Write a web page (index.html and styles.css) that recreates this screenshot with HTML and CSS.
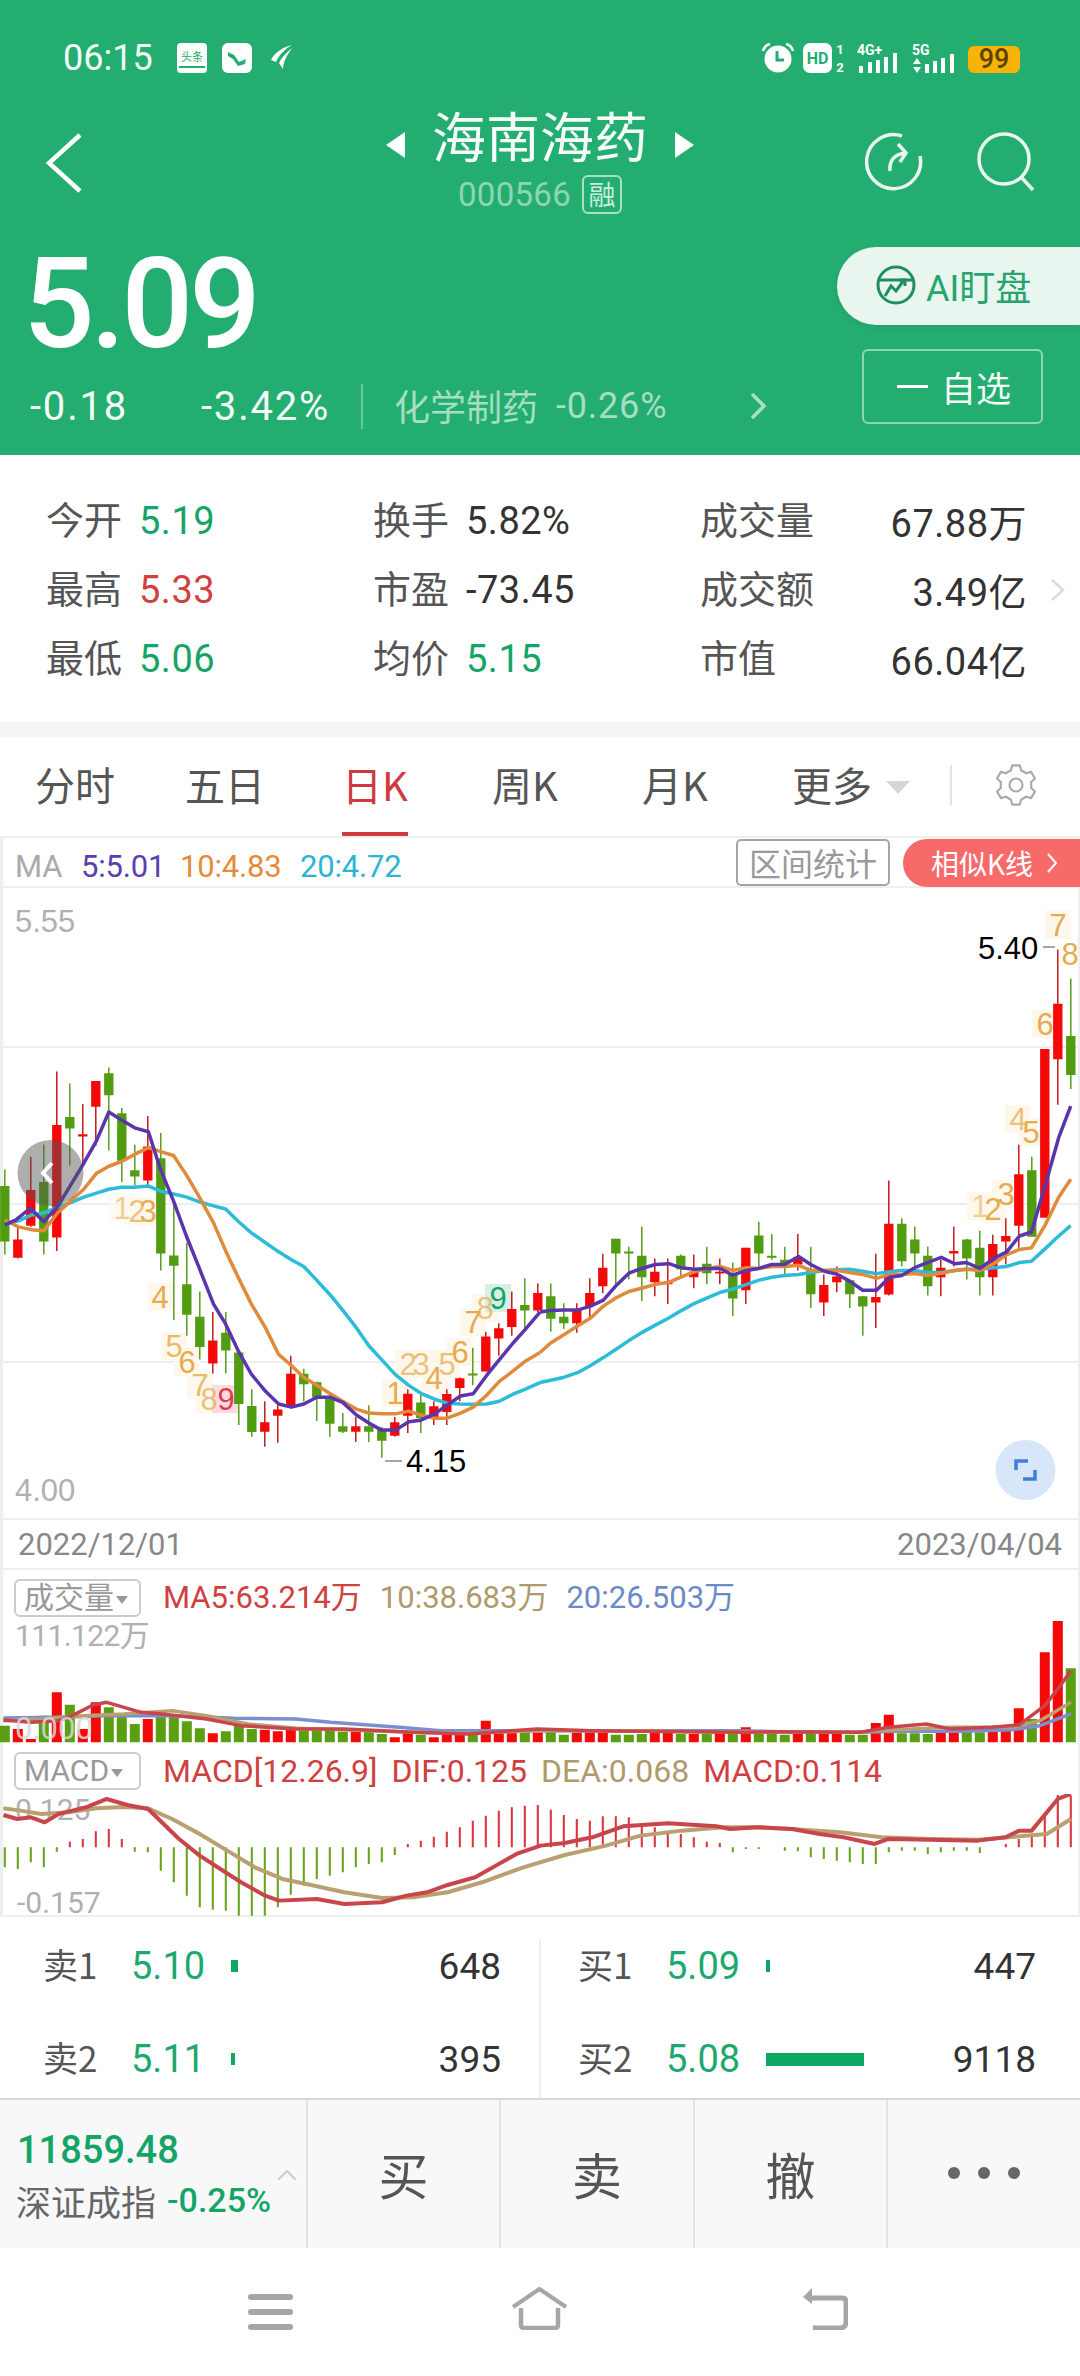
FILE: index.html
```html
<!DOCTYPE html>
<html lang="zh-CN">
<head>
<meta charset="utf-8">
<title>海南海药</title>
<link rel="stylesheet" href="styles.css">
</head>
<body>
<div class="page">
<header class="head">
  <div class="status">
    <span class="time">06:15</span>
    <svg class="st-a" width="30" height="30" viewBox="0 0 30 30"><rect width="30" height="30" rx="4" fill="#fff"/><text x="15" y="18" text-anchor="middle" class="st-small" fill="#23ad70">头条</text><rect x="2" y="23" width="26" height="2" fill="#23ad70"/></svg>
    <svg class="st-b" width="30" height="30" viewBox="0 0 30 30"><rect width="30" height="30" rx="6" fill="#fff"/><path d="M6 9l6 3 5 7 7-3-1 5-7 2-5-7-5-3z" fill="#23ad70"/></svg>
    <svg class="st-c" width="22" height="25" viewBox="0 0 22 25"><path d="M21 0C12 2 3 8 0 15l5 2C8 10 14 4 21 0zM21 3C15 8 10 13 8 18l4 6C12 16 17 9 21 3z" fill="#fff"/></svg>
    <div class="st-right">
      <svg width="32" height="30" viewBox="0 0 32 30"><circle cx="16" cy="16" r="13.5" fill="#fff"/><path d="M15 8v9h7" fill="none" stroke="#23ad70" stroke-width="3"/><path d="M1 8C2 4 4 2 8 1M31 8C30 4 28 2 24 1" fill="none" stroke="#fff" stroke-width="2.5"/></svg>
      <svg class="st-hd" width="42" height="30" viewBox="0 0 42 30"><rect width="29" height="30" rx="7" fill="#fff"/><text x="14.5" y="21" text-anchor="middle" class="st-hdt" fill="#23ad70">HD</text><text x="37" y="11" text-anchor="middle" class="st-num" fill="#fff">1</text><text x="37" y="29" text-anchor="middle" class="st-num" fill="#fff">2</text></svg>
      <svg class="st-sig" width="44" height="30" viewBox="0 0 44 30"><text x="0" y="12" class="st-net" fill="#fff">4G+</text><path d="M11 19h4v11h-4zM19 17h4v13h-4zM27 14h4v16h-4zM36 10h4v20h-4z" fill="#fff"/><path d="M2 23h4v7H2z" fill="#fff"/></svg>
      <svg class="st-sig2" width="46" height="30" viewBox="0 0 46 30"><text x="0" y="12" class="st-net" fill="#fff">5G</text><path d="M5 15l4 6H1zM5 30l4-6H1z" fill="#fff"/><path d="M13 21h4v9h-4zM21 18h4v12h-4zM29 15h4v15h-4zM38 11h4v19h-4z" fill="#fff"/></svg>
      <span class="batt">99</span>
    </div>
  </div>
  <div class="nav">
    <svg class="back" width="36" height="60" viewBox="0 0 36 60"><path d="M34 2L3 30l31 28" fill="none" stroke="#fff" stroke-width="4.5"/></svg>
    <div class="nav-mid">
      <div class="title-row">
        <i class="tri tri-l"></i>
        <span class="title">海南海药</span>
        <i class="tri tri-r"></i>
      </div>
      <div class="code-row"><span class="code">000566</span><span class="rong">融</span></div>
    </div>
    <div class="nav-right">
      <svg width="58" height="60" viewBox="0 0 58 60"><path d="M37 4A27 27 0 1 0 55 24" fill="none" stroke="#e8f6ef" stroke-width="3.5"/><path d="M25 39C24 28 30 22 41 21M33 12l8 9-6 9" fill="none" stroke="#e8f6ef" stroke-width="3.5"/></svg>
      <svg width="58" height="60" viewBox="0 0 58 60"><circle cx="27" cy="27" r="25" fill="none" stroke="#e8f6ef" stroke-width="3.5"/><path d="M45 46l11 12" stroke="#e8f6ef" stroke-width="3.5"/></svg>
    </div>
  </div>
  <div class="quote">
    <div class="q-left">
      <div class="price">5.09</div>
      <div class="chg-row">
        <span class="chg c1">-0.18</span>
        <span class="chg c2">-3.42%</span>
        <span class="sector">化学制药</span>
        <span class="sector-v">-0.26%</span>
        <svg class="sec-arrow" width="16" height="26" viewBox="0 0 16 26"><path d="M2 1l12 12L2 25" fill="none" stroke="#a8e0c4" stroke-width="3.5"/></svg>
      </div>
    </div>
    <div class="q-right">
      <div class="ai">
        <svg width="40" height="40" viewBox="0 0 40 40"><circle cx="20" cy="20" r="18" fill="none" stroke="#1d8f5e" stroke-width="3"/><path d="M3 15h34" stroke="#1d8f5e" stroke-width="3"/><path d="M9 31l6-10 5 5 8-11M23 15h6v6" fill="none" stroke="#1d8f5e" stroke-width="3"/></svg>
        <span>AI盯盘</span>
      </div>
      <div class="fav"><i class="minus"></i><span>自选</span></div>
    </div>
  </div>
</header>

<section class="stats">
  <div class="stat-grid">
    <div class="stat"><span class="lab">今开</span><span class="val gr">5.19</span></div>
    <div class="stat"><span class="lab">换手</span><span class="val">5.82%</span></div>
    <div class="stat wide"><span class="lab">成交量</span><span class="val">67.88万</span></div>
    <div class="stat"><span class="lab">最高</span><span class="val rd">5.33</span></div>
    <div class="stat"><span class="lab">市盈</span><span class="val">-73.45</span></div>
    <div class="stat wide"><span class="lab">成交额</span><span class="val">3.49亿</span></div>
    <div class="stat"><span class="lab">最低</span><span class="val gr">5.06</span></div>
    <div class="stat"><span class="lab">均价</span><span class="val gr">5.15</span></div>
    <div class="stat wide"><span class="lab">市值</span><span class="val">66.04亿</span></div>
  </div>
  <svg class="stat-arrow" width="16" height="22" viewBox="0 0 16 22"><path d="M2 1l11 10L2 21" fill="none" stroke="#dcdcdc" stroke-width="2.5"/></svg>
</section>

<nav class="tabs">
  <div class="tab-grid">
    <div class="tab"><span>分时</span></div>
    <div class="tab"><span>五日</span></div>
    <div class="tab on"><span>日K</span></div>
    <div class="tab"><span>周K</span></div>
    <div class="tab"><span>月K</span></div>
    <div class="tab more"><span>更多</span><i class="more-tri"></i></div>
  </div>
  <i class="tab-rule"></i>
  <svg class="gear" width="42" height="42" viewBox="0 0 42 42"><path d="M17.2 1.4L24.8 1.4 26.05 6.3 31.2 9.3 36.1 7.9 39.9 14.5 36.2 18 36.2 24 39.9 27.5 36.1 34.1 31.2 32.7 26.05 35.7 24.8 40.6 17.2 40.6 15.95 35.7 10.8 32.7 5.9 34.1 2.1 27.5 5.8 24 5.8 18 2.1 14.5 5.9 7.9 10.8 9.3 15.95 6.3Z" fill="none" stroke="#aaa" stroke-width="2.2" stroke-linejoin="round"/><circle cx="21" cy="21" r="6.5" fill="none" stroke="#aaa" stroke-width="2.2"/></svg>
</nav>

<section class="charts">
  <div class="ma-head">
    <div class="ma-list">
      <span class="ma-t">MA</span><span class="ma5">5:5.01</span><span class="ma10">10:4.83</span><span class="ma20">20:4.72</span>
    </div>
    <div class="ma-btns">
      <span class="range">区间统计</span>
      <span class="similar">相似K线<svg width="12" height="22" viewBox="0 0 12 22"><path d="M2 2l8 9-8 9" fill="none" stroke="#fff" stroke-width="2"/></svg></span>
    </div>
  </div>

  <svg class="kline" width="1080" height="630" viewBox="0 888 1080 630">
    <path d="M0 1047H1080M0 1204H1080M0 1362H1080" stroke="#eeeeee" stroke-width="2"/>
    <text x="15" y="932" class="ax">5.55</text>
    <text x="15" y="1501" class="ax">4.00</text>
    <g class="td-bg">
      <rect x="109" y="1194" width="26" height="28" opacity=".6"/><rect x="124" y="1197" width="26" height="28" opacity=".7"/><rect x="135" y="1197" width="26" height="28"/>
      <rect x="148" y="1283" width="26" height="28"/><rect x="161" y="1332" width="26" height="28"/><rect x="174" y="1348" width="26" height="28"/><rect x="187" y="1371" width="26" height="28"/><rect x="196" y="1385" width="26" height="28"/>
      <rect x="382" y="1379" width="26" height="28"/><rect x="395" y="1350" width="26" height="28"/><rect x="408" y="1350" width="26" height="28"/><rect x="421" y="1364" width="26" height="28"/><rect x="434" y="1350" width="26" height="28"/><rect x="447" y="1338" width="26" height="28"/><rect x="460" y="1308" width="26" height="28"/><rect x="472" y="1294" width="26" height="28"/>
      <rect x="967" y="1192" width="26" height="28"/><rect x="980" y="1195" width="26" height="28"/><rect x="992" y="1180" width="26" height="28"/><rect x="1005" y="1105" width="26" height="28"/><rect x="1018" y="1118" width="26" height="28"/><rect x="1032" y="1010" width="26" height="28"/><rect x="1045" y="911" width="26" height="28"/>
      <rect class="td-red" x="212" y="1385" width="26" height="28"/>
      <rect class="td-grn" x="485" y="1284" width="26" height="28"/>
    </g>
    <g class="td">
      <text x="122" y="1219" opacity=".55">1</text><text x="137" y="1222" opacity=".7">2</text><text x="148" y="1222">3</text>
      <text x="160" y="1308">4</text><text x="174" y="1357" opacity=".8">5</text><text x="187" y="1373">6</text><text x="200" y="1396" opacity=".8">7</text><text x="209" y="1410" opacity=".7">8</text>
      <text x="395" y="1404">1</text><text x="408" y="1375" opacity=".7">2</text><text x="421" y="1375" opacity=".7">3</text><text x="434" y="1389">4</text><text x="447" y="1375" opacity=".7">5</text><text x="460" y="1363">6</text><text x="473" y="1333">7</text><text x="485" y="1319" opacity=".7">8</text>
      <text x="980" y="1217" opacity=".55">1</text><text x="993" y="1220">2</text><text x="1006" y="1205">3</text><text x="1018" y="1130" opacity=".7">4</text><text x="1031" y="1143">5</text><text x="1045" y="1035">6</text><text x="1058" y="936">7</text><text x="1070" y="965">8</text>
      <text class="td-r" x="226" y="1410">9</text><text class="td-g" x="498" y="1309">9</text>
    </g>
    <g transform="translate(4.8,900) scale(13,.3962)">
      <path class="wick-r" d="M1 820V905M2 648V825M4 433V886M6 515V670M7 457V620M11 545V720M16 1040V1195M20 1265V1380M21 1275V1370M22 1150V1280M27 1305V1368M30 1305V1355M31 1235V1345M33 1265V1325M34 1235V1325M35 1205V1265M37 1090V1190M38 1068V1150M39 988V1100M41 968V1040M44 1018V1092M45 955V1055M46 893V992M50 905V1000M51 905V1020M53 895V980M55 905V970M57 878V1020M61 843V935M63 945V1050M64 925V990M67 893V1080M68 708V998M72 908V1000M73 824V925M76 845V998M77 803V920M78 618V878M81 125V517"/>
      <path class="body-r" d="M1 857V903M2 732V822M4 568V852M6 591V597M7 457V522M11 622V708M16 1112V1170M20 1318V1342M21 1286V1302M22 1196V1277M27 1328V1342M30 1318V1352M31 1246V1302M33 1278V1305M34 1247V1292M35 1207V1232M37 1102V1190M38 1081V1107M39 1032V1078M41 992V1036M44 1032V1068M45 992V1025M46 928V975M50 938V965M51 965V970M53 938V952M55 938V943M57 878V985M61 902V920M63 972V1016M64 950V965M67 1002V1016M68 817V996M72 928V952M73 886V892M76 868V952M77 848V862M78 692V822M80 376V802M81 262V402"/>
      <path class="wick-g" d="M0 680V895M3 617V895M5 463V670M8 423V632M9 525V712M10 618V720M12 588V935M13 760V1060M14 865V1100M15 988V1160M17 1040V1195M18 1142V1325M19 1235V1355M23 1183V1265M24 1215V1315M25 1250V1355M26 1295V1345M28 1275V1368M29 1330V1408M32 1245V1345M36 1130V1225M40 955V1080M42 968V1090M43 1018V1082M47 855V970M48 875V958M49 824V1012M52 895V950M54 875V970M56 915V1050M58 812V925M59 843V908M60 875V945M62 875V1030M65 958V1030M66 1000V1100M69 803V925M70 824V925M71 875V998M74 855V958M75 835V998M79 648V850M82 198V477"/>
      <path class="body-g" d="M0 722V862M3 712V862M5 548V577M8 437V493M9 538V658M10 682V698M12 652V892M13 897V923M14 970V1047M15 1052V1128M17 1092V1137M18 1142V1272M19 1277V1343M23 1196V1222M24 1217V1255M25 1258V1322M26 1328V1342M28 1328V1342M29 1338V1365M32 1268V1308M36 1195V1200M40 1022V1036M42 1000V1057M43 1052V1068M47 855V892M48 887V892M49 898V952M52 898V932M54 918V942M56 945V1006M58 847V892M59 898V903M60 908V920M62 935V995M65 960V995M66 1000V1026M69 817V912M70 857V892M71 898V975M74 857V905M75 878V952M79 682V850M82 343V442"/>
    </g>
    <g transform="translate(0,900) scale(.3444,.3962)">
      <polyline class="ln cy" points="14,820 54,810 91,795 127,790 167,775 202,765 243,750 280,740 316,730 353,725 391,725 431,722 466,735 504,742 542,750 579,762 620,772 655,780 693,812 730,840 771,865 809,888 846,908 882,925 920,960 957,995 995,1035 1035,1080 1071,1125 1108,1160 1148,1198 1187,1225 1222,1245 1262,1260 1298,1270 1337,1272 1374,1273 1413,1272 1450,1265 1488,1248 1524,1235 1568,1218"/>
      <polyline class="ln or" points="14,808 54,825 91,832 127,835 167,790 202,762 243,730 280,690 316,672 353,660 391,642 431,625 466,635 504,645 542,695 579,750 620,815 655,885 693,955 730,1020 771,1080 809,1147 846,1175 882,1205 920,1225 957,1245 995,1265 1035,1285 1071,1295 1108,1297 1148,1297 1187,1290 1222,1300 1262,1308 1298,1308 1337,1295 1374,1280 1413,1250 1450,1215 1488,1190 1524,1165 1568,1142"/>
      <polyline class="ln pu" points="14,820 45,808 88,778 127,812 170,770 243,665 280,608 316,535 353,555 391,575 431,585 466,680 504,760 542,850 579,930 620,1020 655,1070 693,1140 730,1197 771,1240 809,1272 846,1280 882,1272 920,1255 957,1255 995,1268 1035,1300 1071,1320 1108,1338 1148,1338 1187,1317 1222,1313 1262,1297 1298,1275 1337,1252 1374,1246 1413,1200 1450,1160 1488,1120 1524,1085 1568,1040"/>
    </g>
    <g transform="translate(540,900) scale(.3444,.3962)">
      <polyline class="ln cy" points="0,1218 31,1212 68,1205 109,1193 147,1175 184,1155 219,1135 258,1112 295,1092 335,1073 374,1055 409,1037 449,1018 484,1005 524,990 559,982 600,970 634,960 673,952 710,948 751,945 786,940 826,935 864,933 899,932 937,937 977,943 1015,938 1050,935 1088,935 1125,940 1165,940 1204,935 1238,932 1277,932 1317,928 1355,925 1392,915 1427,912 1467,880 1506,848 1541,822"/>
      <polyline class="ln or" points="0,1142 31,1118 68,1098 109,1075 147,1055 184,1025 219,1005 258,988 295,980 335,970 374,965 409,952 449,938 484,930 524,925 559,935 600,928 634,930 673,925 710,925 751,922 786,935 826,935 864,935 899,940 937,945 977,955 1015,945 1050,945 1088,943 1125,948 1165,942 1204,935 1238,932 1277,935 1317,918 1355,895 1392,882 1427,878 1467,820 1506,750 1541,705"/>
      <polyline class="ln pu" points="0,1040 31,1036 68,1035 109,1035 147,1025 184,1010 219,975 258,942 295,930 335,920 374,918 409,928 449,932 484,930 524,930 559,947 600,935 634,930 673,920 710,920 751,900 786,920 826,937 864,945 899,962 937,985 977,985 1015,952 1050,948 1088,928 1125,915 1165,902 1204,918 1238,915 1277,930 1317,905 1355,888 1392,848 1427,838 1467,720 1506,600 1541,520"/>
    </g>
    <path d="M385 1461H402M1043 947H1055" stroke="#888" stroke-width="1.5"/>
    <text x="406" y="1472" class="mark">4.15</text>
    <text x="978" y="959" class="mark">5.40</text>
    <ellipse cx="50.5" cy="1173" rx="33" ry="33" fill="#555" opacity=".48"/>
    <path d="M52 1163l-9 10 9 10" fill="none" stroke="#fff" stroke-width="4"/>
    <circle cx="1025.5" cy="1470" r="30" fill="#d7e6f9"/>
    <path d="M1016 1470v-9h12M1035 1470v9h-12" fill="none" stroke="#3f7fd8" stroke-width="3.5"/>
  </svg>

  <div class="dates"><span>2022/12/01</span><span>2023/04/04</span></div>

  <div class="ind-head vol-head">
    <span class="ind-btn">成交量<i></i></span>
    <span class="i-r">MA5:63.214万</span><span class="i-t">10:38.683万</span><span class="i-b">20:26.503万</span>
  </div>
  <svg class="vol" width="1080" height="123" viewBox="0 1622 1080 123">
    <text x="15" y="1647" class="ax-s ax-n">111.122万</text>
    <g transform="translate(4.8,1500) scale(13,.3333)">
      <path class="v-r" d="M1 730V690M2 730V720M4 730V580M6 730V690M7 730V610M11 730V660M16 730V703M20 730V692M21 730V697M22 730V690M27 730V698M30 730V715M31 730V700M33 730V715M34 730V707M35 730V705M37 730V665M38 730V697M39 730V700M41 730V700M44 730V700M45 730V700M46 730V700M50 730V690M51 730V695M53 730V705M55 730V700M57 730V685M61 730V700M63 730V705M64 730V705M67 730V672M68 730V647M72 730V700M73 730V700M76 730V695M77 730V690M78 730V628M80 730V460M81 730V362"/>
      <path class="v-g" d="M0 730V680M3 730V650M5 730V617M8 730V625M9 730V645M10 730V675M12 730V650M13 730V650M14 730V667M15 730V688M17 730V697M18 730V680M19 730V690M23 730V695M24 730V695M25 730V695M26 730V698M28 730V697M29 730V705M32 730V707M36 730V707M40 730V697M42 730V697M43 730V707M47 730V707M48 730V707M49 730V705M52 730V705M54 730V705M56 730V705M58 730V705M59 730V705M60 730V707M62 730V705M65 730V707M66 730V707M69 730V703M70 730V703M71 730V705M74 730V700M75 730V700M79 730V660M82 730V508"/>
    </g>
    <g transform="translate(0,1500) scale(.6887,.3333)">
      <polyline class="il bl" points="5,657 80,655 150,650 250,650 340,658 430,660 480,670 580,685 640,695 700,695 1070,695 1160,700 1250,700 1300,697 1400,697 1470,692 1510,680 1555,645"/>
      <polyline class="il tn" points="5,665 60,660 120,650 180,645 250,635 300,650 360,675 430,688 600,700 680,703 780,695 940,695 1000,698 1100,698 1240,700 1300,692 1380,685 1470,685 1510,665 1555,610"/>
      <polyline class="il rl" points="5,663 45,670 85,665 105,650 135,618 155,610 205,640 235,645 300,660 350,680 430,690 500,690 600,700 680,705 780,690 860,695 1000,698 1080,700 1130,698 1250,700 1290,685 1345,675 1380,690 1440,685 1480,678 1517,620 1536,570 1555,515"/>
    </g>
    <text x="15" y="1740" class="ax-o">0.000</text>
  </svg>

  <div class="ind-head macd-head">
    <span class="ind-btn">MACD<i></i></span>
    <span class="i-r">MACD[12.26.9]</span><span class="i-r">DIF:0.125</span><span class="i-t">DEA:0.068</span><span class="i-r">MACD:0.114</span>
  </div>
  <svg class="macd" width="1080" height="123" viewBox="0 1795 1080 123">
    <text x="15" y="1821" class="ax-s">0.125</text>
    <text x="17" y="1914" class="ax-s">-0.157</text>
    <g transform="translate(4.8,1500) scale(13,.3333)">
      <path class="m-g" d="M0 1045V1105M1 1045V1110M2 1045V1090M3 1045V1105M4 1045V1058M10 1045V1058M11 1045V1060M12 1045V1115M13 1045V1150M14 1045V1190M15 1045V1225M16 1045V1232M17 1045V1235M18 1045V1250M19 1045V1250M20 1045V1250M21 1045V1225M22 1045V1187M23 1045V1160M24 1045V1140M25 1045V1130M26 1045V1120M27 1045V1105M28 1045V1095M29 1045V1090M30 1045V1068M56 1045V1060M57 1045V1050M58 1045V1050M60 1045V1055M61 1045V1057M62 1045V1075M63 1045V1080M64 1045V1085M65 1045V1090M66 1045V1095M67 1045V1095M68 1045V1060M69 1045V1055M70 1045V1055M71 1045V1065M72 1045V1060M73 1045V1055M74 1045V1055M75 1045V1062"/>
      <path class="m-r" d="M5 1045V1028M6 1045V1020M7 1045V997M8 1045V990M9 1045V1020M31 1045V1035M32 1045V1025M33 1045V1013M34 1045V998M35 1045V985M36 1045V965M37 1045V950M38 1045V935M39 1045V925M40 1045V920M41 1045V918M42 1045V932M43 1045V948M44 1045V960M45 1045V965M46 1045V952M47 1045V952M48 1045V955M49 1045V972M50 1045V985M51 1045V995M52 1045V1005M53 1045V1015M54 1045V1028M55 1045V1032M77 1045V1035M78 1045V1020M79 1045V1008M80 1045V950M81 1045V888M82 1045V890"/>
    </g>
    <g transform="translate(0,1500) scale(.6887,.3333)">
      <polyline class="il tn thick" points="5,928 30,935 60,945 100,940 140,928 180,924 215,928 250,960 290,1005 330,1055 370,1105 410,1140 445,1155 500,1180 555,1197 600,1195 650,1180 700,1150 760,1105 820,1068 880,1040 930,1010 990,995 1050,985 1100,985 1150,990 1220,1000 1280,1015 1350,1020 1420,1022 1480,1012 1520,1005 1555,960"/>
      <polyline class="il rl thick" points="5,948 25,960 45,955 65,970 85,945 105,935 125,925 155,900 185,918 215,930 235,970 260,1020 290,1070 320,1110 350,1150 385,1190 405,1205 460,1200 500,1215 555,1210 590,1190 620,1180 650,1158 690,1135 720,1100 750,1065 785,1040 820,1032 860,1015 905,982 970,973 1040,982 1060,990 1100,985 1150,990 1190,1005 1225,1015 1270,1035 1290,1020 1350,1022 1420,1025 1460,1015 1480,995 1498,995 1536,900 1555,885"/>
    </g>
  </svg>
</section>

<section class="book">
  <div class="side">
    <div class="b-row"><span class="b-l">卖1</span><span class="b-v">5.10</span><span class="b-bar"><i class="bar-w7"></i></span><span class="b-q">648</span></div>
    <div class="b-row"><span class="b-l">卖2</span><span class="b-v">5.11</span><span class="b-bar"><i class="bar-w4"></i></span><span class="b-q">395</span></div>
  </div>
  <i class="book-rule"></i>
  <div class="side side-r">
    <div class="b-row"><span class="b-l">买1</span><span class="b-v">5.09</span><span class="b-bar"><i class="bar-w4"></i></span><span class="b-q">447</span></div>
    <div class="b-row"><span class="b-l">买2</span><span class="b-v">5.08</span><span class="b-bar"><i class="bar-big"></i></span><span class="b-q">9118</span></div>
  </div>
</section>

<section class="actions">
  <div class="idx">
    <div class="idx-t">
      <div class="idx-num">11859.48</div>
      <div class="idx-sub"><span>深证成指</span><b>-0.25%</b></div>
    </div>
    <svg class="idx-up" width="20" height="10" viewBox="0 0 20 10"><path d="M1 10L10 1l9 9" fill="none" stroke="#ccc" stroke-width="2"/></svg>
  </div>
  <div class="act">买</div>
  <div class="act">卖</div>
  <div class="act">撤</div>
  <div class="act dots"><i></i><i></i><i></i></div>
</section>

<footer class="sysnav">
  <svg width="45" height="36" viewBox="0 0 45 36"><path d="M3 3h39M3 18h39M3 33h39" stroke="#a6a6a6" stroke-width="6" stroke-linecap="round"/></svg>
  <svg class="home" width="57" height="43" viewBox="0 0 57 43"><path d="M2 20L28.500 2 55 20" fill="none" stroke="#a6a6a6" stroke-width="4" stroke-linejoin="round"/><path d="M10 21v17q0 3 3 3h31q3 0 3-3V21" fill="none" stroke="#a6a6a6" stroke-width="4.500"/></svg>
  <svg class="ret" width="46" height="43" viewBox="0 0 46 43"><path d="M9 11h31q4 0 4 4v20q0 6-6 6H11" fill="none" stroke="#a6a6a6" stroke-width="5"/><path d="M10 1L1 10l9 7z" fill="#a6a6a6"/></svg>
</footer>
</div>
</body>
</html>
```
FILE: styles.css
```css
* { box-sizing: border-box; margin: 0; padding: 0; }
html, body { width: 1080px; background: #fff; }
body { font-family: Roboto, "Noto Sans CJK SC", sans-serif; color: #333; overflow-x: hidden; }
i { font-style: normal; display: block; }
svg { display: block; }
.page { width: 1080px; height: 2376px; overflow: hidden; }

/* header */
.head { height: 455px; background: #24ad71; color: #fff; }
.status { height: 90px; padding: 43px 60px 0 63px; display: flex; align-items: flex-start; }
.time { font-size: 36px; line-height: 30px; width: 114px; color: #f2fbf6; }
.st-b { margin-left: 15px; }
.st-c { margin-left: 19px; margin-top: 2px; }
.st-small { font: 11px "Noto Sans CJK SC", sans-serif; }
.st-hdt { font: 700 16px Roboto, sans-serif; }
.st-num { font: 700 13px Roboto, sans-serif; }
.st-net { font: 700 14px Roboto, sans-serif; }
.st-right { margin-left: auto; display: flex; align-items: flex-start; }
.st-hd { margin-left: 9px; }
.st-sig { margin-left: 12px; }
.st-sig2 { margin-left: 11px; }
.batt { margin-left: 10px; width: 52px; height: 27px; margin-top: 3px; background: #f9b208; border-radius: 6px; color: #5a4300; font-size: 27px; font-weight: 500; line-height: 27px; text-align: center; }

.nav { height: 157px; display: grid; grid-template-columns: 1fr auto 1fr; padding: 0 45px; }
.back { margin: 43px 0 0 1px; }
.nav-mid { display: flex; flex-direction: column; align-items: center; }
.title-row { display: flex; align-items: center; margin-top: 15px; height: 60px; }
.title { font-size: 54px; line-height: 60px; margin: 0 27px; font-family: "Noto Sans CJK SC", sans-serif; color: #f6fcf9; }
.tri { width: 0; height: 0; border-top: 13px solid transparent; border-bottom: 13px solid transparent; margin-top: 20px; }
.tri-l { border-right: 19px solid #fff; }
.tri-r { border-left: 19px solid #fff; }
.code-row { display: flex; align-items: center; margin-top: 10px; }
.code { font-size: 33px; letter-spacing: .3px; color: #8ed6b3; }
.rong { margin-left: 11px; width: 40px; height: 39px; border: 2px solid #a8e0c4; border-radius: 6px; font-size: 27px; line-height: 33px; text-align: center; color: #c9eddb; font-family: "Noto Sans CJK SC", sans-serif; }
.nav-right { display: flex; justify-content: flex-end; gap: 54px; padding-top: 42px; }

.quote { height: 208px; display: flex; justify-content: space-between; }
.q-left { padding-left: 23px; }
.price { font-size: 126px; font-weight: 500; line-height: 110px; letter-spacing: -4px; margin-top: 2px; color: #fff; }
.chg-row { display: flex; align-items: center; height: 46px; margin-top: 24px; width: 743px; padding-left: 7px; }
.chg { font-size: 40px; color: #f2fbf6; letter-spacing: 1.800px; }
.c1 { width: 171px; }
.c2 { width: 160px; height: 45px; line-height: 45px; }
.sector { border-left: 2px solid #69c79c; height: 45px; line-height: 42px; padding-left: 31px; font-size: 36px; color: #a5dec1; font-family: "Noto Sans CJK SC", sans-serif; width: 195px; white-space: nowrap; }
.sector-v { font-size: 36px; color: #a5dec1; letter-spacing: .8px; }
.sec-arrow { margin-left: auto; }
.q-right { display: flex; flex-direction: column; align-items: flex-end; }
.ai { width: 243px; height: 78px; background: #e9f5ef; border-radius: 39px 0 0 39px; display: flex; align-items: center; padding: 0 0 3px 39px; gap: 10px; box-shadow: 0 2px 6px rgba(0,0,0,.08); }
.ai span { font-size: 36px; color: #26a56d; font-family: Roboto, "Noto Sans CJK SC", sans-serif; }
.fav { margin: 24px 37px 0 0; width: 181px; height: 75px; border: 2px solid #8ed6b3; border-radius: 6px; display: flex; align-items: center; padding-left: 33px; gap: 13px; }
.minus { width: 31px; height: 3px; background: #fff; }
.fav span { font-size: 35px; color: #f2fbf6; font-family: "Noto Sans CJK SC", sans-serif; }

/* stats */
.stats { height: 267px; padding: 31px 0 29px 46px; display: flex; align-items: center; }
.stat-grid { width: 981px; display: grid; grid-template-columns: 327px 327px 327px; grid-auto-rows: 69px; }
.stat-arrow { margin-left: 23px; }
.stat { display: flex; align-items: center; gap: 17px; font-size: 37px; }
.stat.wide { justify-content: space-between; }
.lab { color: #555; font-family: "Noto Sans CJK SC", sans-serif; font-size: 38px; padding-bottom: 6px; }
.val { color: #333; font-size: 38px; letter-spacing: .5px; font-family: Roboto, "Noto Sans CJK SC", sans-serif; }
.gr { color: #14a566; }
.rd { color: #d23f3f; }

/* tabs */
.tabs { height: 114px; border-top: 15px solid #f4f5f7; display: flex; align-items: center; }
.tab-grid { width: 900px; height: 99px; display: grid; grid-template-columns: repeat(6, 150px); }
.tab { display: flex; justify-content: center; align-items: stretch; font-size: 40px; color: #555; font-family: "Noto Sans CJK SC", Roboto, sans-serif; white-space: nowrap; height: 99px; }
.tab span { display: flex; align-items: center; height: 99px; padding-bottom: 2px; border-bottom: 4px solid transparent; }
.tab.on { color: #d0393f; }
.tab.on span { border-bottom-color: #d0393f; }
.tab.more { justify-content: flex-start; padding-left: 42px; align-items: flex-start; gap: 14px; }
.more-tri { width: 0; height: 0; border-left: 12px solid transparent; border-right: 12px solid transparent; border-top: 13px solid #d6d6d6; margin-top: 44px; }
.tab-rule { width: 2px; height: 40px; background: #e3e3e3; margin-left: 50px; margin-top: -4px; }
.gear { margin-left: 43px; margin-top: -4px; }

/* charts */
.charts { height: 1081px; background: linear-gradient(#eee, #eee) left top / 3px 100% no-repeat, linear-gradient(#eee, #eee) right top / 2px 100% no-repeat; border-top: 2px solid #eee; border-bottom: 2px solid #eee; }
.ma-head { height: 50px; border-bottom: 2px solid #eee; display: flex; justify-content: space-between; align-items: flex-start; padding-left: 15px; }
.ma-list { display: flex; font-size: 31px; line-height: 32px; padding-top: 13px; font-family: Roboto, sans-serif; letter-spacing: -.2px; }
.ma-t { color: #aaa; width: 66px; }
.ma5 { color: #5a3fb0; width: 99px; }
.ma10 { color: #e78a3a; width: 120px; }
.ma20 { color: #2bb5d5; }
.ma-btns { display: flex; gap: 13px; padding-top: 1px; }
.range { width: 154px; height: 47px; border: 2px solid #a5a5a5; border-radius: 5px; color: #999; font-size: 32px; line-height: 42px; text-align: center; font-family: "Noto Sans CJK SC", sans-serif; }
.similar { width: 177px; height: 48px; background: #f66a6a; border-radius: 24px 0 0 24px; color: #fff; font-size: 28px; display: flex; align-items: center; padding-left: 28px; gap: 13px; font-family: "Noto Sans CJK SC", Roboto, sans-serif; }

.ax { font: 31px "Liberation Sans", sans-serif; fill: #b0b0b0; }
.mark { font: 31px "Liberation Sans", sans-serif; fill: #000; }
.td-bg rect { fill: #fef7ec; }
.td-bg rect.td-red { fill: #fbdbe0; }
.td-bg rect.td-grn { fill: #d8f0e4; }
.td text { font: 31px "Liberation Sans", sans-serif; fill: #e6ab4e; text-anchor: middle; }
.td text.td-r { fill: #e03a50; }
.td text.td-g { fill: #14a36a; }
.wick-r, .wick-g, .body-r, .body-g { fill: none; }
.wick-r { stroke: #c40f0f; stroke-width: .11; }
.wick-g { stroke: #4f9a10; stroke-width: .11; }
.body-r { stroke: #f50808; stroke-width: .72; }
.body-g { stroke: #519c10; stroke-width: .72; }
.ln { fill: none; stroke-width: 3.500px; vector-effect: non-scaling-stroke; stroke-linejoin: round; }
.pu { stroke: #5a35ad; }
.or { stroke: #e08a3c; }
.cy { stroke: #2cbcd8; }

.dates { height: 52px; border-top: 2px solid #eee; border-bottom: 2px solid #eee; display: flex; justify-content: space-between; align-items: center; padding: 0 18px; font-size: 31px; color: #888; }
.ind-head { height: 51px; padding: 9px 0 0 14px; display: flex; align-items: flex-start; font-size: 31px; line-height: 38px; font-family: Roboto, "Noto Sans CJK SC", sans-serif; }
.ind-btn { width: 127px; height: 38px; margin-right: 22px; border: 2px solid #ccc; border-radius: 6px; color: #999; display: flex; align-items: center; padding-left: 8px; gap: 2px; line-height: 32px; flex: none; font-size: 30px; }
.ind-btn i { width: 0; height: 0; border-left: 6px solid transparent; border-right: 6px solid transparent; border-top: 8px solid #999; margin-top: 3px; }
.vol-head span + span { margin-right: 18px; }
.macd-head { height: 50px; padding-top: 8px; font-size: 32px; }
.macd-head span + span { margin-right: 14px; }
.i-r { color: #d0403f; }
.i-t { color: #b09a6c; }
.i-b { color: #6a8ac8; }
.ax-s { font: 30px Roboto, "Noto Sans CJK SC", sans-serif; fill: #b0b0b0; }
.ax-n { letter-spacing: -.6px; }
.ax-o { font: 31px Roboto, sans-serif; fill: #d8d8d8; opacity: .85; }
.v-r, .v-g { fill: none; stroke-width: .77; }
.v-r { stroke: #f50808; }
.v-g { stroke: #5a9e12; }
.m-r, .m-g { fill: none; stroke-width: .16; }
.m-r { stroke: #d9363e; }
.m-g { stroke: #6aa41f; }
.il { fill: none; stroke-width: 3.500px; vector-effect: non-scaling-stroke; stroke-linejoin: round; }
.bl { stroke: #7a8fd0; }
.tn { stroke: #b9a070; }
.rl { stroke: #c8454b; }
.thick { stroke-width: 4px; }

/* book */
.book { height: 181px; display: flex; }
.side { width: 539px; padding: 10px 38px 0 43px; display: flex; flex-direction: column; gap: 15px; }
.side-r { width: 539px; padding: 10px 44px 0 37px; }
.book-rule { width: 2px; height: 159px; background: #eee; align-self: flex-end; }
.b-row { height: 78px; display: grid; grid-template-columns: 88px 100px 1fr auto; align-items: center; }
.b-l { font-size: 35px; color: #555; font-family: "Noto Sans CJK SC", Roboto, sans-serif; padding-bottom: 6px; }
.b-v { font-size: 38px; color: #1da86e; }
.b-q { font-size: 37px; color: #333; }
.bar-w7 { width: 7px; height: 12px; background: #0fa862; }
.bar-w4 { width: 4px; height: 12px; background: #0fa862; }
.bar-big { width: 98px; height: 13px; background: #0fa862; }

/* actions */
.actions { height: 150px; border-top: 2px solid #d8d8d8; background: #f8f8f9; display: grid; grid-template-columns: 306px 193px 194px 193px 194px; }
.idx { display: flex; padding: 28px 0 0 16px; }
.idx-num { font-size: 38px; font-weight: 500; line-height: 44px; color: #14a566; padding-left: 1px; }
.idx-sub { display: flex; align-items: center; gap: 11px; margin-top: 8px; height: 40px; white-space: nowrap; }
.idx-sub span { font-size: 35px; color: #666; font-family: "Noto Sans CJK SC", sans-serif; }
.idx-sub b { font-size: 34px; font-weight: 500; color: #14a566; }
.idx-up { margin: 42px 0 0 6px; }
.act { border-left: 2px solid #e3e3e5; display: flex; align-items: center; justify-content: center; font-size: 50px; color: #555; font-family: "Noto Sans CJK SC", sans-serif; padding-bottom: 2px; }
.dots { gap: 18px; }
.dots i { width: 12px; height: 12px; border-radius: 50%; background: #666; }

/* system nav */
.sysnav { height: 127px; padding: 39px 0 0 248px; display: flex; align-items: flex-start; }
.sysnav svg:first-child { margin-top: 7px; }
.home { margin-left: 218px; }
.ret { margin-left: 234px; }
```
